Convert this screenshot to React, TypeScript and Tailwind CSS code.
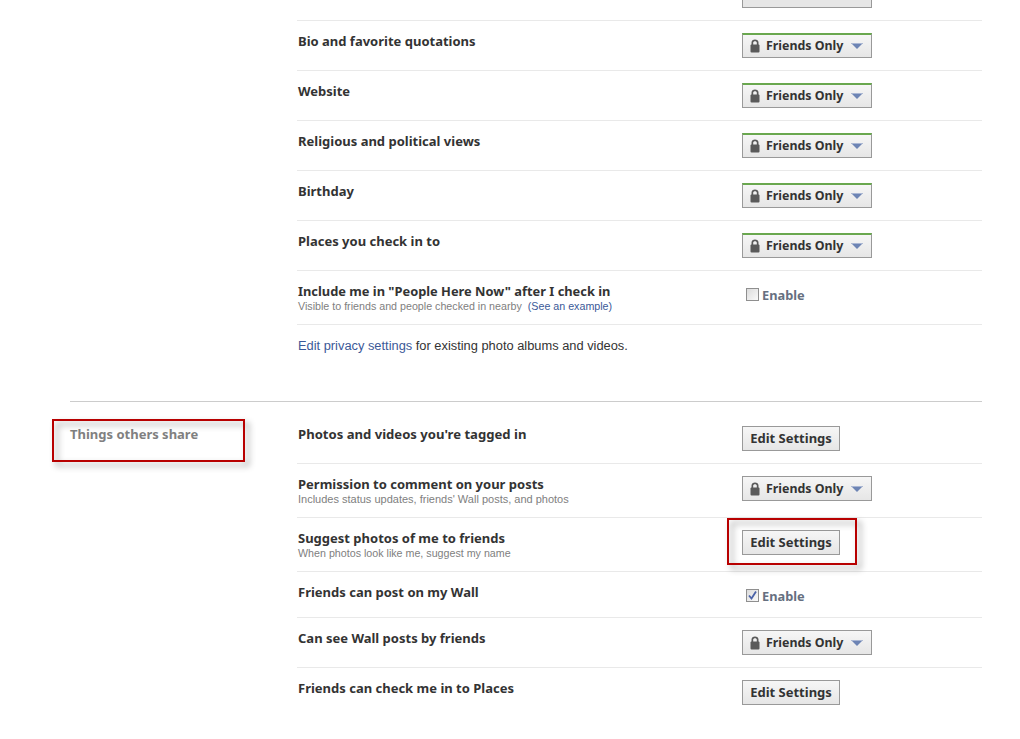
const BOLD = 'font-["Noto_Sans",sans-serif] font-bold'
const PLAIN = 'font-["Liberation_Sans",sans-serif]'

function LockIcon() {
  return (
    <svg width="10" height="14" viewBox="0 0 10 14" className="shrink-0">
      <path d="M1.500 7V3.600C1.500 1.700 3 .5 5 .5s3.500 1.200 3.500 3.100V7H6.800V3.800C6.800 2.800 6 2.300 5 2.300S3.200 2.800 3.200 3.800V7z" fill="#5a5a5a" />
      <rect x="0.500" y="5.500" width="9" height="8" rx="1" fill="#5a5a5a" />
    </svg>
  )
}

function Arrow() {
  return (
    <svg width="12" height="6" viewBox="0 0 12 6" className="shrink-0">
      <path d="M0 0h12L6 6z" fill="#6d84b4" />
      <rect x="1" y="0" width="10" height="1" fill="#a9b6d3" />
    </svg>
  )
}

function FriendsOnly({ green }: { green?: boolean }) {
  return (
    <button
      type="button"
      className={`flex h-[25px] w-[130px] items-center border border-[#999] bg-gradient-to-b from-[#f6f6f6] to-[#e6e6e6] pl-[7px] ${green ? 'border-t-2 border-t-[#6aa84f]' : ''}`}
    >
      <LockIcon />
      <span className={`ml-[6px] pt-[1px] text-[12.4px] leading-none text-[#333] ${BOLD}`}>Friends Only</span>
      <span className="ml-[8px]"><Arrow /></span>
    </button>
  )
}

function EditSettings() {
  return (
    <button
      type="button"
      className={`flex h-[25px] w-[98px] items-center justify-center border border-[#999] bg-gradient-to-b from-[#f6f6f6] to-[#e6e6e6] text-[13px] leading-none text-[#333] ${BOLD}`}
    >
      Edit Settings
    </button>
  )
}

function Enable({ checked }: { checked?: boolean }) {
  return (
    <div className="flex items-start self-start pl-[4px] pt-[5px]">
      <span className="relative h-[13px] w-[13px] border border-[#8f8f8f] bg-gradient-to-br from-[#dcdcdc] to-[#fafafa]">
        {checked && (
          <svg width="11" height="11" viewBox="0 0 11 11" className="absolute left-0 top-0">
            <path d="M2 5.500l2.500 3L9 1.500" fill="none" stroke="#4a62a8" strokeWidth="1.800" />
          </svg>
        )}
      </span>
      <span className={`ml-[3px] text-[12.8px] leading-[14px] text-[#666f80] ${BOLD}`}>Enable</span>
    </div>
  )
}

function Row({ label, sub, control, className, labelClass = 'text-[13px]', subClass = 'text-[10.7px]' }: {
  label: string
  sub?: React.ReactNode
  control: React.ReactNode
  className: string
  labelClass?: string
  subClass?: string
}) {
  return (
    <div className={`flex border-b border-[#e9e9e9] pl-[1px] ${className}`}>
      <div className="w-[444px]">
        <div className={`leading-[16px] text-[#333] ${BOLD} ${labelClass}`}>{label}</div>
        {sub && <div className={`leading-[14px] text-[#808080] ${PLAIN} ${subClass}`}>{sub}</div>}
      </div>
      {control}
    </div>
  )
}

const FIRST_ROWS = ['Bio and favorite quotations', 'Website', 'Religious and political views', 'Birthday', 'Places you check in to']

export default function App() {
  return (
    <div className="relative h-[739px] w-[1020px] overflow-hidden bg-white">
      <div className="ml-[297px] mr-[38px] h-[21px] border-b border-[#e9e9e9] pl-[445px]">
        <div className="h-[8px] w-[130px] border border-t-0 border-[#999] bg-[#e6e6e6]" />
      </div>

      <div className="ml-[297px] mr-[38px]">
        {FIRST_ROWS.map((label) => (
          <Row key={label} label={label} className="h-[50px] pt-[12px]" control={<FriendsOnly green />} />
        ))}
        <Row
          label={'Include me in "People Here Now" after I check in'}
          labelClass="text-[12.85px]"
          sub={<>Visible to friends and people checked in nearby <span className="ml-[3px] text-[#3b5998]">(See an example)</span></>}
          className="h-[54px] pt-[12px]"
          control={<Enable />}
        />
        <p className={`pl-[1px] pt-[13px] text-[12.85px] leading-[16px] text-[#333] ${PLAIN}`}>
          <span className="text-[#3b5998]">Edit privacy settings</span> for existing photo albums and videos.
        </p>
      </div>

      <div className="ml-[70px] mr-[38px] mt-[47px] flex border-t border-[#ccc] pt-[12px]">
        <div className={`w-[227px] pt-[12px] text-[13px] leading-[16px] text-[#808080] ${BOLD}`}>Things others share</div>
        <div className="flex-1">
          <Row label="Photos and videos you're tagged in" labelClass="text-[13.1px]" className="h-[50px] pt-[12px]" control={<EditSettings />} />
          <Row
            label="Permission to comment on your posts"
            sub="Includes status updates, friends' Wall posts, and photos"
            subClass="text-[11px]"
            className="h-[54px] pt-[12px]"
            control={<FriendsOnly />}
          />
          <Row
            label="Suggest photos of me to friends"
            sub="When photos look like me, suggest my name"
            className="h-[54px] pt-[12px]"
            control={<EditSettings />}
          />
          <Row label="Friends can post on my Wall" className="h-[46px] pt-[12px]" control={<Enable checked />} />
          <Row label="Can see Wall posts by friends" className="h-[50px] pt-[12px]" control={<FriendsOnly />} />
          <div className="flex pl-[1px] pt-[12px]">
            <div className={`w-[444px] text-[13px] leading-[16px] text-[#333] ${BOLD}`}>Friends can check me in to Places</div>
            <EditSettings />
          </div>
        </div>
      </div>

      {/* annotation boxes */}
      <div className="absolute left-[52px] top-[419px] h-[43px] w-[193px] border-2 border-[#b80000] drop-shadow-[4px_4px_3px_rgba(0,0,0,0.4)]" />
      <div className="absolute left-[727px] top-[518px] h-[47px] w-[130px] border-2 border-[#b80000] drop-shadow-[4px_4px_3px_rgba(0,0,0,0.4)]" />
    </div>
  )
}
